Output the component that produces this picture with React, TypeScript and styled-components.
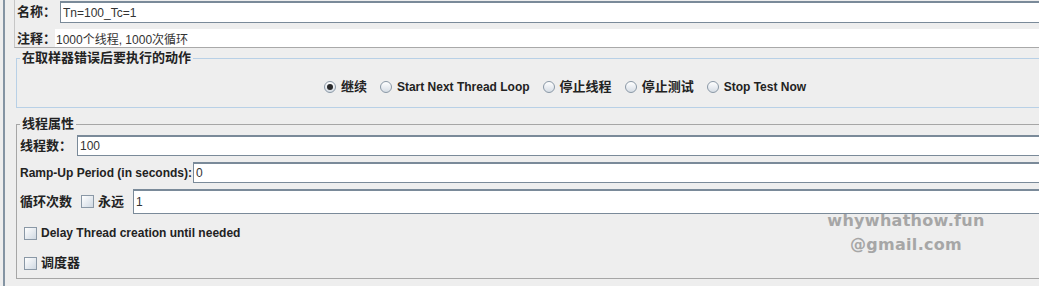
import React from "react";
import styled, { createGlobalStyle } from "styled-components";

const GlobalStyle = createGlobalStyle`
    html, body {
        margin: 0;
        padding: 0;
        background: #eeeeee;
    }
    body {
        font-family: "Liberation Sans", "Noto Sans CJK SC", sans-serif;
        font-size: 12px;
        color: #222;
    }
`;

const radios = [
    { label: "继续", cjk: true, checked: true },
    { label: "Start Next Thread Loop", cjk: false, checked: false },
    { label: "停止线程", cjk: true, checked: false },
    { label: "停止测试", cjk: true, checked: false },
    { label: "Stop Test Now", cjk: false, checked: false },
];

const App: React.FC = () => {
    return (
        <Page>
            <GlobalStyle />
            <Frame>
                <NamePanel>
                    <NameRow>
                        <Label cjk w={43}>名称：</Label>
                        <NameInput readOnly defaultValue="Tn=100_Tc=1" />
                    </NameRow>
                    <CommentRow>
                        <Label cjk w={38}>注释：</Label>
                        <CommentInput readOnly defaultValue="1000个线程, 1000次循环" />
                    </CommentRow>
                </NamePanel>

                <ErrorBox>
                    <Legend>在取样器错误后要执行的动作</Legend>
                    <RadioRow>
                        {radios.map((r) => (
                            <RadioItem key={r.label}>
                                <Radio checked={r.checked} />
                                <Label cjk={r.cjk}>{r.label}</Label>
                            </RadioItem>
                        ))}
                    </RadioRow>
                </ErrorBox>

                <ThreadBox>
                    <Legend>线程属性</Legend>
                    <FieldRow top={3} h={21}>
                        <Label cjk w={57}>线程数：</Label>
                        <TextField readOnly defaultValue="100" />
                    </FieldRow>
                    <FieldRow top={6} h={21}>
                        <Label w={173}>Ramp-Up Period (in seconds):</Label>
                        <TextField readOnly defaultValue="0" />
                    </FieldRow>
                    <FieldRow top={6} h={25}>
                        <Label cjk w={61}>循环次数</Label>
                        <CheckBox />
                        <Label cjk w={35}>永远</Label>
                        <TextField readOnly defaultValue="1" />
                    </FieldRow>
                    <CheckRow top={10}>
                        <CheckBox />
                        <Label>Delay Thread creation until needed</Label>
                    </CheckRow>
                    <CheckRow top={12}>
                        <CheckBox />
                        <Label cjk>调度器</Label>
                    </CheckRow>
                </ThreadBox>
            </Frame>
            <Watermark>
                whywhathow.fun
                <br />
                @gmail.com
            </Watermark>
        </Page>
    );
};

export const Page = styled.div`
    position: relative;
    width: 1039px;
    height: 286px;
    overflow: hidden;
    background: #eeeeee;
`;

export const Frame = styled.div`
    margin-left: 3px;
    border-left: 2px solid #8494a3;
    padding-left: 9px;
    width: 1106px;
    height: 286px;
    box-sizing: content-box;
`;

export const NamePanel = styled.div`
    border-left: 1px solid #c6c6c6;
    border-bottom: 1px solid #a9a9a9;
    padding-left: 2px;
    height: 47px;
`;

export const NameRow = styled.div`
    display: flex;
    align-items: center;
    height: 23px;
`;

export const CommentRow = styled.div`
    display: flex;
    align-items: flex-end;
    height: 24px;
`;

export const Label = styled.span<{ cjk?: boolean; w?: number }>`
    display: inline-block;
    flex: none;
    font-weight: bold;
    font-size: ${(p) => (p.cjk ? "13px" : "12px")};
    line-height: 16px;
    color: #222;
    white-space: nowrap;
    width: ${(p) => (p.w ? `${p.w}px` : "auto")};
`;

export const NameInput = styled.input`
    flex: 1;
    min-width: 0;
    margin-top: 1px;
    height: 22px;
    box-sizing: border-box;
    border: 1px solid #7a8a99;
    border-top-width: 2px;
    background: #fff;
    padding: 0 2px;
    font: 12px "Liberation Sans", sans-serif;
    color: #333;
    outline: none;
`;

export const CommentInput = styled.input`
    flex: 1;
    min-width: 0;
    height: 18px;
    box-sizing: border-box;
    border: none;
    background: #fff;
    padding: 0 1px;
    font: 12px "Liberation Sans", "Noto Sans CJK SC", sans-serif;
    color: #333;
    outline: none;
`;

const Box = styled.fieldset`
    margin: 0 0 0 2px;
    padding: 0 3px;
    min-inline-size: 0;
`;

export const ErrorBox = styled(Box)`
    margin-top: 2px;
    border: 1px solid #b8d0e6;
    padding-top: 13px;
    padding-bottom: 12px;
`;

export const ThreadBox = styled(Box)`
    margin-top: 8px;
    border: 1px solid #a6a6a6;
    padding-bottom: 6px;
`;

export const Legend = styled.legend`
    padding: 0 2px;
    font-weight: bold;
    font-size: 13px;
    line-height: 16px;
    color: #222;
`;

export const RadioRow = styled.div`
    display: flex;
    justify-content: center;
    align-items: center;
    gap: 13px;
    height: 16px;
    padding-right: 6px;
`;

export const RadioItem = styled.div`
    display: flex;
    align-items: center;
    gap: 5px;
`;

export const Radio = styled.span<{ checked?: boolean }>`
    position: relative;
    width: 12px;
    height: 12px;
    box-sizing: border-box;
    border-radius: 50%;
    border: 1px solid #8a98a6;
    background: linear-gradient(#ffffff, #d6dde5);
    &::after {
        content: "";
        display: ${(p) => (p.checked ? "block" : "none")};
        position: absolute;
        left: 2px;
        top: 2px;
        width: 6px;
        height: 6px;
        border-radius: 50%;
        background: #2a2a2a;
    }
`;

export const FieldRow = styled.div<{ top: number; h: number }>`
    display: flex;
    align-items: center;
    margin-top: ${(p) => p.top}px;
    height: ${(p) => p.h}px;
`;

export const TextField = styled.input`
    flex: 1;
    min-width: 0;
    height: 100%;
    box-sizing: border-box;
    border: 1px solid #7a8a99;
    border-top-width: 2px;
    background: #fff;
    padding: 0 2px;
    font: 12px "Liberation Sans", sans-serif;
    color: #333;
    outline: none;
`;

export const CheckBox = styled.span`
    flex: none;
    width: 13px;
    height: 13px;
    box-sizing: border-box;
    border: 1px solid #8a98a6;
    background: linear-gradient(135deg, #ffffff, #cfd8e2);
    margin: 0 4px 0 0;
`;

export const CheckRow = styled.div<{ top: number }>`
    display: flex;
    align-items: center;
    margin-top: ${(p) => p.top}px;
    height: 18px;
    padding-left: 4px;
`;

export const Watermark = styled.div`
    position: absolute;
    left: 816px;
    top: 209px;
    width: 180px;
    text-align: center;
    font-family: "DejaVu Sans", sans-serif;
    font-weight: bold;
    font-size: 16px;
    line-height: 24px;
    color: #a6a6a6;
    letter-spacing: 0.3px;
`;

export default App;
